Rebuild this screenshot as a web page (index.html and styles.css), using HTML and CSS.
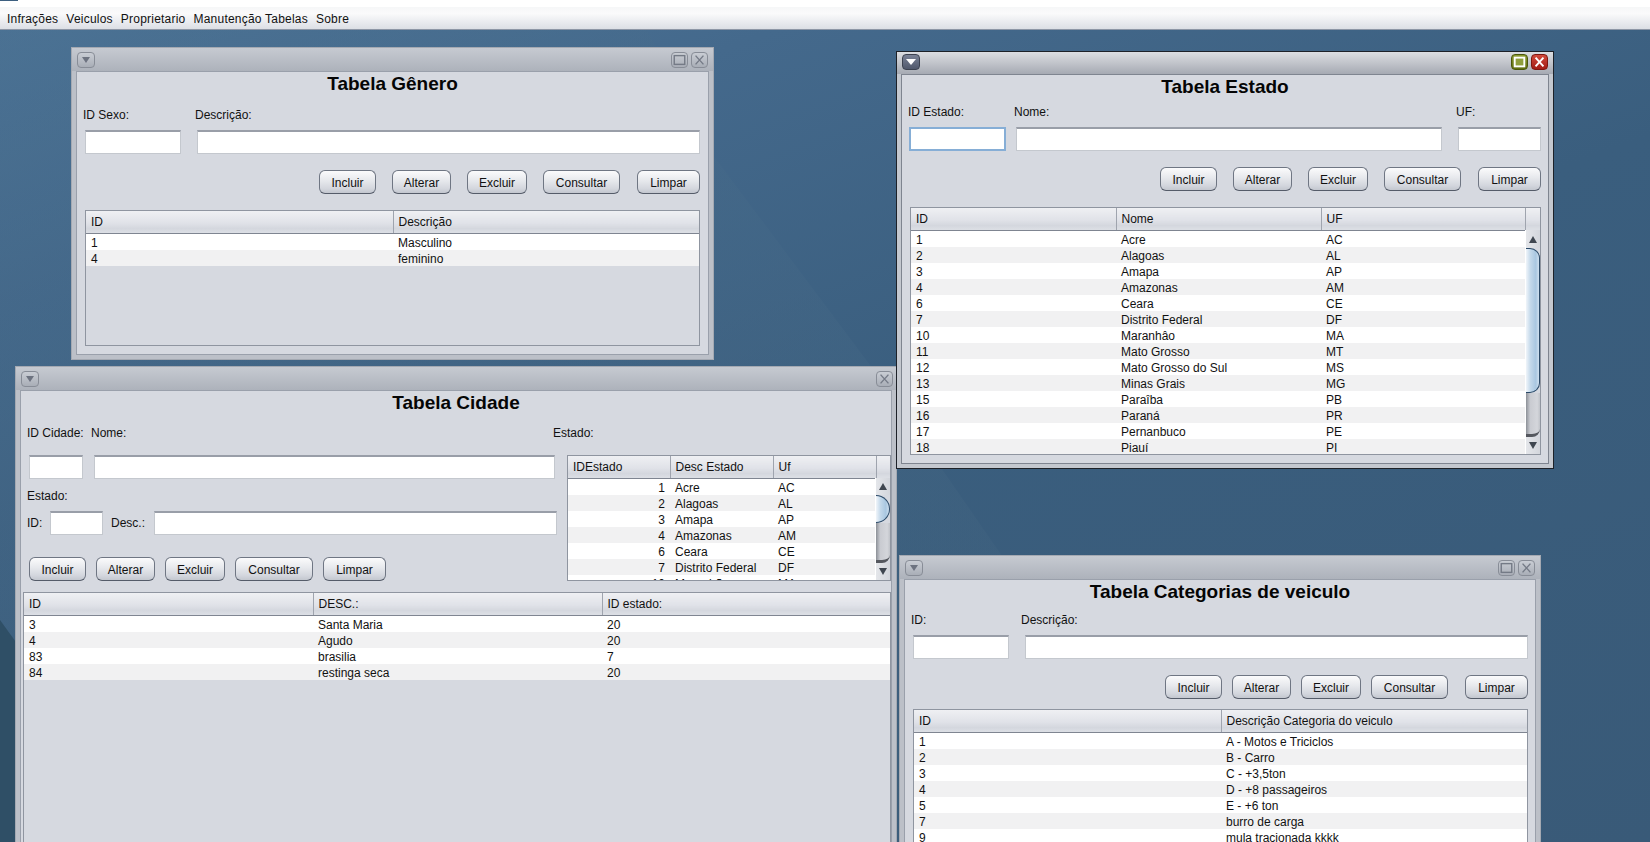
FILE: index.html
```html
<!DOCTYPE html>
<html lang="pt-BR">
<head>
  <meta charset="UTF-8" />
  <title>Controle de Infrações</title>
  <link rel="stylesheet" href="styles.css">
</head>
<body>
  <div class="topline"><span class="topmark"></span></div>
  <nav class="menubar">
    <span>Infrações</span>
    <span>Veiculos</span>
    <span>Proprietario</span>
    <span>Manutenção Tabelas</span>
    <span>Sobre</span>
  </nav>

  <main class="desktop">
    <div class="wedge"></div>
    <div class="wedge-dark"></div>

    <!-- Tabela Genero -->
    <section class="win win-genero">
      <div class="titlebar">
        <button class="tb-menu"><i></i></button>
        <span class="tb-gap"></span>
        <button class="tb-btn"><svg viewBox="0 0 16 16"><rect x="2" y="3" width="12" height="10"/></svg></button>
        <button class="tb-btn"><svg viewBox="0 0 16 16"><path d="M3.5 3l9 10M12.5 3l-9 10"/></svg></button>
      </div>
      <div class="frame">
        <h2>Tabela Gênero</h2>
        <div class="fields fields-genero">
          <label>ID Sexo:</label>
          <label>Descrição:</label>
          <input type="text">
          <input type="text">
        </div>
        <div class="actions">
          <button class="b-incluir">Incluir</button>
          <button class="b-alterar">Alterar</button>
          <button class="b-excluir">Excluir</button>
          <button class="b-consultar">Consultar</button>
          <button class="b-limpar">Limpar</button>
        </div>
        <div class="jtable jtable-genero">
          <table>
            <colgroup><col class="c-307"><col></colgroup>
            <thead><tr><th>ID</th><th>Descrição</th></tr></thead>
            <tbody>
              <tr><td>1</td><td>Masculino</td></tr>
              <tr><td>4</td><td>feminino</td></tr>
            </tbody>
          </table>
        </div>
      </div>
    </section>

    <!-- Tabela Cidade -->
    <section class="win win-cidade">
      <div class="titlebar">
        <button class="tb-menu"><i></i></button>
        <span class="tb-gap"></span>
        <button class="tb-btn"><svg viewBox="0 0 16 16"><path d="M3.5 3l9 10M12.5 3l-9 10"/></svg></button>
      </div>
      <div class="frame">
        <h2>Tabela Cidade</h2>
        <div class="cidade-top">
          <div class="cidade-form">
            <div class="row row-labels">
              <label class="l-cidade">ID Cidade:</label>
              <label>Nome:</label>
            </div>
            <div class="row row-inputs">
              <input class="i-54" type="text">
              <input class="i-461" type="text">
            </div>
            <label class="l-estado">Estado:</label>
            <div class="row row-desc">
              <label class="l-id">ID:</label>
              <input class="i-53" type="text">
              <label class="l-desc">Desc.:</label>
              <input class="i-403" type="text">
            </div>
            <div class="actions actions-left">
              <button class="b-incluir">Incluir</button>
              <button class="b-alterar">Alterar</button>
              <button class="b-excluir">Excluir</button>
              <button class="b-consultar">Consultar</button>
              <button class="b-limpar">Limpar</button>
            </div>
          </div>
          <div class="cidade-side">
            <label class="l-side">Estado:</label>
            <div class="jtable jtable-side">
              <table>
                <colgroup><col class="c-102"><col class="c-103"><col class="c-103"><col></colgroup>
                <thead><tr><th>IDEstado</th><th>Desc Estado</th><th>Uf</th><th></th></tr></thead>
                <tbody>
                  <tr><td class="num">1</td><td>Acre</td><td>AC</td><td></td></tr>
                  <tr><td class="num">2</td><td>Alagoas</td><td>AL</td><td></td></tr>
                  <tr><td class="num">3</td><td>Amapa</td><td>AP</td><td></td></tr>
                  <tr><td class="num">4</td><td>Amazonas</td><td>AM</td><td></td></tr>
                  <tr><td class="num">6</td><td>Ceara</td><td>CE</td><td></td></tr>
                  <tr><td class="num">7</td><td>Distrito Federal</td><td>DF</td><td></td></tr>
                  <tr><td class="num">10</td><td>Maranhão</td><td>MA</td><td></td></tr>
                </tbody>
              </table>
              <div class="scroll">
                <div class="sb-arrow"><i class="up"></i></div>
                <div class="sb-thumb sb-thumb-side"></div>
                <div class="sb-track"></div>
                <div class="sb-arrow"><i class="down"></i></div>
              </div>
            </div>
          </div>
        </div>
        <div class="jtable jtable-cidade">
          <table>
            <colgroup><col class="c-289"><col class="c-289"><col></colgroup>
            <thead><tr><th>ID</th><th>DESC.:</th><th>ID estado:</th></tr></thead>
            <tbody>
              <tr><td>3</td><td>Santa Maria</td><td>20</td></tr>
              <tr><td>4</td><td>Agudo</td><td>20</td></tr>
              <tr><td>83</td><td>brasilia</td><td>7</td></tr>
              <tr><td>84</td><td>restinga seca</td><td>20</td></tr>
            </tbody>
          </table>
        </div>
      </div>
    </section>

    <!-- Tabela Categorias -->
    <section class="win win-categ">
      <div class="titlebar">
        <button class="tb-menu"><i></i></button>
        <span class="tb-gap"></span>
        <button class="tb-btn"><svg viewBox="0 0 16 16"><rect x="2" y="3" width="12" height="10"/></svg></button>
        <button class="tb-btn"><svg viewBox="0 0 16 16"><path d="M3.5 3l9 10M12.5 3l-9 10"/></svg></button>
      </div>
      <div class="frame">
        <h2>Tabela Categorias de veiculo</h2>
        <div class="fields fields-categ">
          <label>ID:</label>
          <label>Descrição:</label>
          <input type="text">
          <input type="text">
        </div>
        <div class="actions actions-tight">
          <button class="b-incluir">Incluir</button>
          <button class="b-alterar">Alterar</button>
          <button class="b-excluir">Excluir</button>
          <button class="b-consultar">Consultar</button>
          <button class="b-limpar">Limpar</button>
        </div>
        <div class="jtable jtable-categ">
          <table>
            <colgroup><col class="c-307"><col></colgroup>
            <thead><tr><th>ID</th><th>Descrição Categoria do veiculo</th></tr></thead>
            <tbody>
              <tr><td>1</td><td>A - Motos e Triciclos</td></tr>
              <tr><td>2</td><td>B - Carro</td></tr>
              <tr><td>3</td><td>C - +3,5ton</td></tr>
              <tr><td>4</td><td>D - +8 passageiros</td></tr>
              <tr><td>5</td><td>E - +6 ton</td></tr>
              <tr><td>7</td><td>burro de carga</td></tr>
              <tr><td>9</td><td>mula tracionada kkkk</td></tr>
            </tbody>
          </table>
        </div>
      </div>
    </section>

    <!-- Tabela Estado (janela ativa) -->
    <section class="win win-estado active">
      <div class="titlebar">
        <button class="tb-menu"><i></i></button>
        <span class="tb-gap"></span>
        <button class="tb-btn tb-max"><svg viewBox="0 0 16 16"><rect x="2.5" y="3" width="11" height="10"/></svg></button>
        <button class="tb-btn tb-close"><svg viewBox="0 0 16 16"><path d="M3.5 3l9 10M12.5 3l-9 10"/></svg></button>
      </div>
      <div class="frame">
        <h2>Tabela Estado</h2>
        <div class="fields fields-estado">
          <label>ID Estado:</label>
          <label>Nome:</label>
          <label>UF:</label>
          <input class="focus" type="text">
          <input type="text">
          <input type="text">
        </div>
        <div class="actions">
          <button class="b-incluir">Incluir</button>
          <button class="b-alterar">Alterar</button>
          <button class="b-excluir">Excluir</button>
          <button class="b-consultar">Consultar</button>
          <button class="b-limpar">Limpar</button>
        </div>
        <div class="jtable jtable-estado">
          <table>
            <colgroup><col class="c-205"><col class="c-205"><col class="c-204"><col></colgroup>
            <thead><tr><th>ID</th><th>Nome</th><th>UF</th><th></th></tr></thead>
            <tbody>
              <tr><td>1</td><td>Acre</td><td>AC</td><td></td></tr>
              <tr><td>2</td><td>Alagoas</td><td>AL</td><td></td></tr>
              <tr><td>3</td><td>Amapa</td><td>AP</td><td></td></tr>
              <tr><td>4</td><td>Amazonas</td><td>AM</td><td></td></tr>
              <tr><td>6</td><td>Ceara</td><td>CE</td><td></td></tr>
              <tr><td>7</td><td>Distrito Federal</td><td>DF</td><td></td></tr>
              <tr><td>10</td><td>Maranhâo</td><td>MA</td><td></td></tr>
              <tr><td>11</td><td>Mato Grosso</td><td>MT</td><td></td></tr>
              <tr><td>12</td><td>Mato Grosso do Sul</td><td>MS</td><td></td></tr>
              <tr><td>13</td><td>Minas Grais</td><td>MG</td><td></td></tr>
              <tr><td>15</td><td>Paraîba</td><td>PB</td><td></td></tr>
              <tr><td>16</td><td>Paraná</td><td>PR</td><td></td></tr>
              <tr><td>17</td><td>Pernanbuco</td><td>PE</td><td></td></tr>
              <tr><td>18</td><td>Piauí</td><td>PI</td><td></td></tr>
            </tbody>
          </table>
          <div class="scroll">
            <div class="sb-arrow sb-arrow-tall"><i class="up"></i></div>
            <div class="sb-thumb sb-thumb-estado"></div>
            <div class="sb-track"></div>
            <div class="sb-arrow"><i class="down"></i></div>
          </div>
        </div>
      </div>
    </section>
  </main>
</body>
</html>
```

FILE: styles.css
```css
* {
  box-sizing: border-box;
}
html, body {
  height: 100%;
}
body {
  margin: 0;
  height: 842px;
  overflow: hidden;
  display: flex;
  flex-direction: column;
  font-family: "Liberation Sans", Arial, sans-serif;
  font-size: 12px;
  color: #111;
}

/* menu */
.topline {
  height: 7px;
  background: #fff;
}
.topmark {
  display: block;
  width: 18px;
  height: 1px;
  background: #3d5f80;
}
.menubar {
  height: 23px;
  padding: 1px 0 0 7px;
  display: flex;
  align-items: center;
  gap: 8px;
  letter-spacing: .22px;
  background: linear-gradient(#f6f7f8, #fafafb 30%, #dcdfe5);
  border-bottom: 1px solid #8e97a6;
}

/* desktop */
.desktop {
  flex: 1;
  position: relative;
  overflow: hidden;
  background: linear-gradient(160deg, #4d7598 0, #44698c 20%, #3a5e7e 50%, #395a78 100%);
}
.wedge {
  position: absolute;
  inset: 0;
  background: linear-gradient(#476c8c, #3f5f7a);
  clip-path: polygon(0 0, 647px 0, 713px 125px, 870px 335px, 1200px 812px, 0 812px);
  opacity: .4;
}
.wedge-dark {
  position: absolute;
  inset: 0;
  background: #2f4f66;
  clip-path: polygon(0 590px, 160px 812px, 0 812px);
}

/* windows */
.win {
  position: absolute;
  display: flex;
  flex-direction: column;
  background: #bcc0c8;
  border: 1px solid #a4a9b2;
}
.win-genero {
  left: 71px;
  top: 17px;
  width: 643px;
  height: 313px;
}
.win-cidade {
  left: 15px;
  top: 336px;
  width: 882px;
  height: 520px;
}
.win-categ {
  left: 899px;
  top: 525px;
  width: 642px;
  height: 340px;
}
.win-estado {
  left: 896px;
  top: 21px;
  width: 658px;
  height: 418px;
}
.win.active {
  border-color: #1d2128;
  background: #c4c8cf;
}
.titlebar {
  height: 23px;
  flex: none;
  padding: 4px 5px 0 5px;
  display: flex;
  align-items: flex-start;
  gap: 3px;
  background: linear-gradient(#c6cad1, #adb2bb);
}
.win-cidade .titlebar {
  padding-right: 3px;
}
.active .titlebar {
  height: 22px;
  padding-top: 2px;
  background: linear-gradient(#dcdee2, #a6aab3);
}
.tb-gap {
  flex: 1;
}
.tb-menu, .tb-btn {
  width: 17px;
  height: 16px;
  padding: 0;
  display: flex;
  align-items: center;
  justify-content: center;
  border: 1px solid #888d97;
  border-radius: 4px;
  background: linear-gradient(#c9cdd4, #a9aeb7);
}
.tb-menu {
  width: 18px;
}
.tb-menu i {
  width: 0;
  height: 0;
  border-left: 4px solid transparent;
  border-right: 4px solid transparent;
  border-top: 6px solid #6d7380;
}
.tb-btn svg {
  width: 15px;
  height: 14px;
  fill: none;
  stroke: #747a86;
  stroke-width: 1.6;
}
.active .tb-menu {
  background: linear-gradient(#7a8296, #50586c);
  border-color: #3c4250;
}
.active .tb-menu i {
  border-left-width: 5px;
  border-right-width: 5px;
  border-top-color: #fff;
}
.active .tb-btn svg {
  stroke: #fff;
  stroke-width: 2.2;
}
.active .tb-max svg {
  fill: #8f9e3c;
}
.tb-max {
  background: linear-gradient(#8b9a30, #616f10);
  border-color: #4b560c;
}
.tb-close {
  background: linear-gradient(#d24a3c, #a31d15);
  border-color: #7e1710;
}
.frame {
  flex: 1;
  min-height: 0;
  margin: 0 4px 4px;
  display: flex;
  flex-direction: column;
  background: #d6d9e0;
  border: 1px solid #9aa0ab;
}
.active .frame {
  border-color: #7f8590;
}
h2 {
  margin: 0;
  height: 23px;
  line-height: 24px;
  flex: none;
  text-align: center;
  font-size: 19px;
  font-weight: bold;
  color: #050505;
}

/* form */
label {
  display: block;
  height: 14px;
  line-height: 14px;
  white-space: nowrap;
}
input {
  display: block;
  height: 24px;
  margin: 0;
  padding: 0;
  background: #fff;
  border: 1px solid #c4c8ce;
  border-top: 2px solid #999ea8;
  border-radius: 0;
  outline: none;
}
input.focus {
  border: 2px solid #86aed6;
}
.fields {
  display: grid;
  row-gap: 8px;
}
.fields label {
  margin-left: -2px;
}
.fields-genero {
  grid-template-columns: 96px 503px;
  column-gap: 16px;
  margin: 13px 0 0 8px;
}
.fields-categ {
  grid-template-columns: 96px 503px;
  column-gap: 16px;
  margin: 10px 0 0 8px;
}
.fields-categ label:nth-child(2) {
  margin-left: -4px;
}
.fields-estado {
  grid-template-columns: 97px 426px 83px;
  margin: 7px 0 0 7px;
  column-gap: 10px;
}
.fields-estado label:first-child {
  margin-left: -1px;
}
.fields-estado label:nth-child(3) {
  margin-left: 4px;
}
.fields-estado input:last-child {
  width: 83px;
  margin-left: 6px;
}
.actions {
  display: flex;
  justify-content: flex-end;
  gap: 16px;
  margin: 16px 8px 16px 0;
}
.actions .b-limpar {
  margin-left: 1px;
}
.win-estado .actions {
  margin-right: 7px;
}
.actions-tight {
  gap: 10px;
  margin: 16px 7px 10px 0;
}
.actions-tight .b-limpar {
  margin-left: 7px;
}
.actions-left {
  justify-content: flex-start;
  gap: 10px;
  margin: 22px 0 0 2px;
}
.actions-left .b-limpar {
  margin-left: 0;
}
.actions-left .b-consultar {
  width: 78px;
}
button {
  font: inherit;
  color: #111;
}
.actions button {
  height: 24px;
  padding: 2px 0 0;
  background: linear-gradient(#fbfbfc, #e6e8ec 45%, #d3d6dd 80%, #c3c7cf);
  border: 1px solid #6f7683;
  border-bottom-color: #555c69;
  border-radius: 6px;
}
.b-incluir { width: 57px; }
.b-alterar { width: 59px; }
.b-excluir { width: 60px; }
.b-consultar { width: 77px; }
.b-limpar { width: 63px; }

/* tabelas */
.jtable {
  position: relative;
  overflow: hidden;
  background: #d6d9e0;
  border: 1px solid #8f95a0;
}
.jtable-genero {
  height: 136px;
  margin: 0 8px 0;
  flex: none;
}
.jtable-estado {
  height: 248px;
  margin: 0 7px 0 8px;
  flex: none;
}
.jtable-categ {
  height: 300px;
  margin: 0 7px 0 8px;
  flex: none;
}
.jtable-side {
  height: 126px;
  margin-top: 15px;
  background: #fff;
}
.jtable-cidade {
  height: 300px;
  margin: 11px 0 0 2px;
  flex: none;
}
table {
  width: 100%;
  table-layout: fixed;
  border-collapse: collapse;
}
.c-307 { width: 307px; }
.c-289 { width: 289px; }
.c-205 { width: 205px; }
.c-204 { width: 204px; }
.c-103 { width: 103px; }
.c-102 { width: 102px; }
th {
  height: 22px;
  padding: 1px 5px 0;
  text-align: left;
  font-weight: normal;
  background: linear-gradient(#eff0f3, #e0e2e8 55%, #d4d7de 80%, #dcdfe5);
  border-right: 1px solid #9fa4ae;
  border-bottom: 1px solid #7f8591;
  white-space: nowrap;
  overflow: hidden;
}
th:last-child {
  border-right: none;
}
td {
  height: 16px;
  padding: 2px 5px 0;
  line-height: 14px;
  background: #fff;
  white-space: nowrap;
  overflow: hidden;
}
tbody tr:nth-child(even) td {
  background: #f1f1f2;
}
td.num {
  text-align: right;
}

/* cidade */
.cidade-top {
  display: flex;
}
.cidade-form {
  width: 546px;
  padding: 12px 0 0 6px;
}
.cidade-side {
  width: 324px;
  padding-top: 12px;
}
.row {
  display: flex;
  align-items: center;
}
.l-cidade {
  width: 64px;
}
.row-inputs {
  margin: 15px 0 0 2px;
  gap: 11px;
}
.l-estado {
  margin-top: 10px;
}
.row-desc {
  margin-top: 8px;
}
.l-id {
  width: 23px;
}
.l-desc {
  width: 43px;
  margin-left: 8px;
}
.i-53 { width: 53px; }
.i-54 { width: 54px; }
.i-403 { width: 403px; }
.i-461 { width: 461px; }
.l-side {
  margin-left: -14px;
}

/* scroll */
.scroll {
  position: absolute;
  top: 22px;
  right: 0;
  bottom: 0;
  width: 15px;
  display: flex;
  flex-direction: column;
  background: #d6d9e0;
  border-left: 1px solid #fff;
}
.sb-arrow {
  height: 17px;
  flex: none;
  display: flex;
  align-items: center;
  justify-content: center;
  background: linear-gradient(90deg, #e4e6ea, #d3d6dc);
}
.sb-arrow-tall {
  height: 18px;
}
.sb-arrow i {
  width: 0;
  height: 0;
  border-left: 4px solid transparent;
  border-right: 4px solid transparent;
}
.sb-arrow .up {
  border-bottom: 7px solid #3f4650;
}
.sb-arrow .down {
  border-top: 7px solid #3f4650;
}
.sb-thumb {
  flex: none;
  background: linear-gradient(90deg, #f0f5fa, #c3d8ea 35%, #a9c7e1 75%, #cfe0ef);
  border: 1px solid #2b4a68;
  border-left: none;
  border-radius: 0 10px 10px 0;
}
.sb-thumb-estado {
  height: 145px;
}
.sb-thumb-side {
  height: 28px;
  border-radius: 0 14px 14px 0;
}
.sb-track {
  flex: 1;
  background: linear-gradient(90deg, #8c9097, #c9cbd1 30%, #d4d6db 80%, #c0c3c9);
  border-bottom: 3px solid #55585f;
  border-bottom-right-radius: 8px;
}
```
